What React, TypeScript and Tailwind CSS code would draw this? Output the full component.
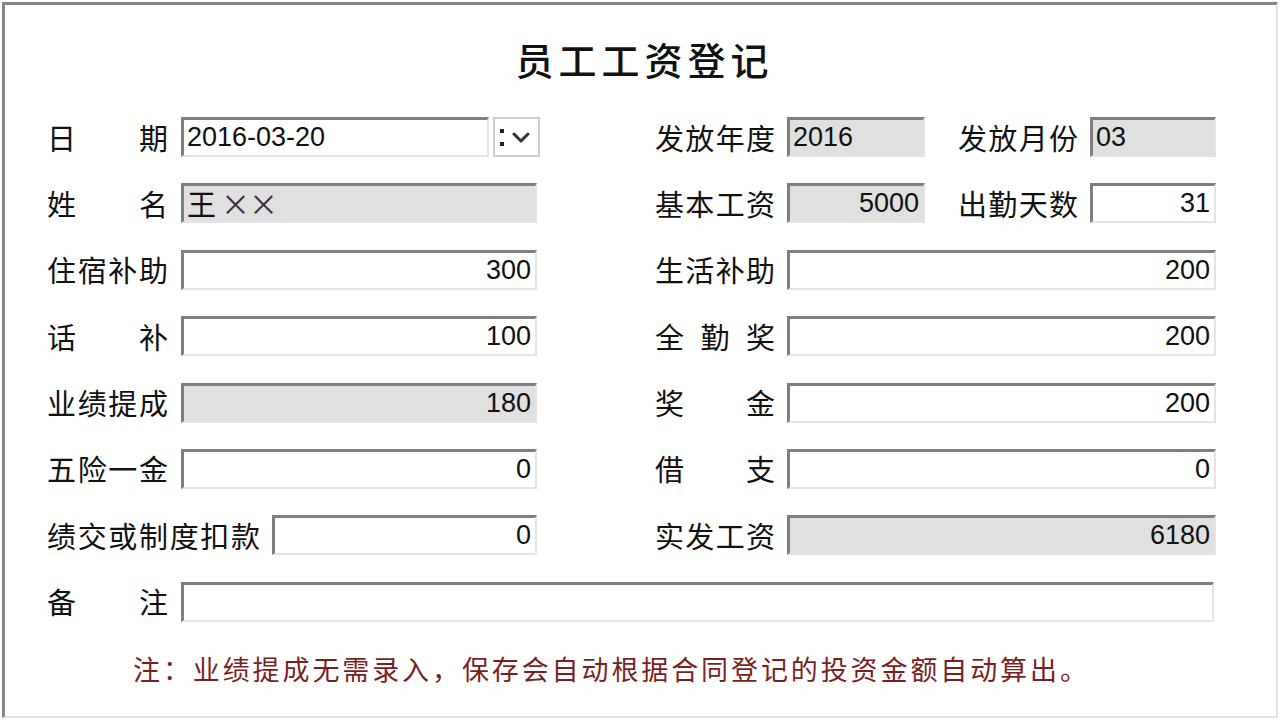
import React from 'react';

const CJK = '"Noto Sans CJK SC", "Noto Sans", sans-serif';
const NUM = '"Liberation Sans", "Noto Sans CJK SC", sans-serif';

interface LabelProps {
  text: string;
  width: number;
}

// each character spread across a fixed width, like the old form designer did
const Label: React.FC<LabelProps> = ({ text, width }) => (
  <div
    className="flex shrink-0 justify-between text-[29px] leading-none text-[#111]"
    style={{ width, fontFamily: CJK }}
  >
    {text.split('').map((ch, i) => (
      <span key={i}>{ch}</span>
    ))}
  </div>
);

interface FieldProps {
  value?: string;
  width: number;
  readOnly?: boolean;
  align?: 'left' | 'right';
  className?: string;
}

const Field: React.FC<FieldProps> = ({ value = '', width, readOnly, align = 'right', className = '' }) => (
  <div
    className={
      'flex h-10 shrink-0 items-center border-t-[3px] border-l-[3px] border-r-2 border-b-2 border-t-[#7f7f7f] border-l-[#7f7f7f] border-r-[#e4e4e4] border-b-[#e4e4e4] text-[27px] leading-none text-[#111] ' +
      (readOnly ? 'bg-[#e0e0e0] ' : 'bg-white ') +
      (align === 'right' ? 'justify-end pr-[4px] ' : 'justify-start pl-[3px] ') +
      className
    }
    style={{ width, fontFamily: NUM }}
  >
    {value}
  </div>
);

const Row: React.FC<{ children: React.ReactNode }> = ({ children }) => (
  <div className="flex h-10 items-center">{children}</div>
);

const Left: React.FC<{ children: React.ReactNode }> = ({ children }) => (
  <div className="flex w-[608px] shrink-0 items-center">{children}</div>
);

const App: React.FC = () => {
  return (
    <div className="h-[720px] w-[1280px] overflow-hidden bg-white pl-[2px] pt-[2px]">
      <div className="flex h-[716px] w-[1276px] flex-col border-t-[3px] border-l-[3px] border-r-2 border-b-2 border-t-[#858585] border-l-[#858585] border-r-[#e2e2e2] border-b-[#e2e2e2] bg-white">
        <div className="flex h-[112px] items-center justify-center pb-[4px] pl-[8px]">
          <h1
            className="text-[38px] font-medium leading-none tracking-[5px] text-[#111]"
            style={{ fontFamily: CJK }}
          >
            员工工资登记
          </h1>
        </div>

        <div className="flex flex-col gap-[26.4px] pl-[42px]">
          <Row>
            <Left>
              <Label text="日期" width={121} />
              <div className="ml-[4px] flex items-center">
                <Field value="2016-03-20" width={308} align="left" className="ml-[9px]" />
                <div className="ml-[4px] flex h-10 w-[47px] items-center justify-between border-2 border-[#cfcfcf] bg-white pl-[5px] pr-[8px]">
                  <span className="flex flex-col gap-[9px]">
                    <span className="h-[4px] w-[4px] bg-[#222]" />
                    <span className="h-[4px] w-[4px] bg-[#222]" />
                  </span>
                  <svg width="18" height="11" viewBox="0 0 18 11" fill="none">
                    <path d="M2 2l7 7 7-7" stroke="#333" strokeWidth="3" strokeLinecap="round" strokeLinejoin="round" />
                  </svg>
                </div>
              </div>
            </Left>
            <Label text="发放年度" width={120} />
            <Field value="2016" width={138} readOnly align="left" className="ml-[12px]" />
            <div className="ml-[33px]">
              <Label text="发放月份" width={120} />
            </div>
            <Field value="03" width={126} readOnly align="left" className="ml-[12px]" />
          </Row>

          <Row>
            <Left>
              <Label text="姓名" width={121} />
              <div
                className="ml-[13px] flex h-10 w-[356px] items-center border-t-[3px] border-l-[3px] border-r-2 border-b-2 border-t-[#7f7f7f] border-l-[#7f7f7f] border-r-[#e4e4e4] border-b-[#e4e4e4] bg-[#e0e0e0] pl-[3px] text-[29px] leading-none text-[#111]"
                style={{ fontFamily: CJK }}
              >
                <span className="w-[34px]">王</span>
                <span className="w-[28px] text-[#333]">×</span>
                <span className="w-[28px] text-[#333]">×</span>
              </div>
            </Left>
            <Label text="基本工资" width={120} />
            <Field value="5000" width={138} readOnly className="ml-[12px]" />
            <div className="ml-[33px]">
              <Label text="出勤天数" width={120} />
            </div>
            <Field value="31" width={126} className="ml-[12px]" />
          </Row>

          <Row>
            <Left>
              <Label text="住宿补助" width={121} />
              <Field value="300" width={356} className="ml-[13px]" />
            </Left>
            <Label text="生活补助" width={120} />
            <Field value="200" width={429} className="ml-[12px]" />
          </Row>

          <Row>
            <Left>
              <Label text="话补" width={121} />
              <Field value="100" width={356} className="ml-[13px]" />
            </Left>
            <Label text="全勤奖" width={120} />
            <Field value="200" width={429} className="ml-[12px]" />
          </Row>

          <Row>
            <Left>
              <Label text="业绩提成" width={121} />
              <Field value="180" width={356} readOnly className="ml-[13px]" />
            </Left>
            <Label text="奖金" width={120} />
            <Field value="200" width={429} className="ml-[12px]" />
          </Row>

          <Row>
            <Left>
              <Label text="五险一金" width={121} />
              <Field value="0" width={356} className="ml-[13px]" />
            </Left>
            <Label text="借支" width={120} />
            <Field value="0" width={429} className="ml-[12px]" />
          </Row>

          <Row>
            <Left>
              <Label text="绩交或制度扣款" width={213} />
              <Field value="0" width={265} className="ml-[12px]" />
            </Left>
            <Label text="实发工资" width={120} />
            <Field value="6180" width={429} readOnly className="ml-[12px]" />
          </Row>

          <Row>
            <Label text="备注" width={121} />
            <Field width={1033} className="ml-[13px]" />
          </Row>
        </div>

        <p
          className="mt-[32px] pl-[128px] text-[27px] leading-[30px] tracking-[2.9px] text-[#7a1f1f]"
          style={{ fontFamily: CJK }}
        >
          注：业绩提成无需录入，保存会自动根据合同登记的投资金额自动算出。
        </p>
      </div>
    </div>
  );
};

export default App;
